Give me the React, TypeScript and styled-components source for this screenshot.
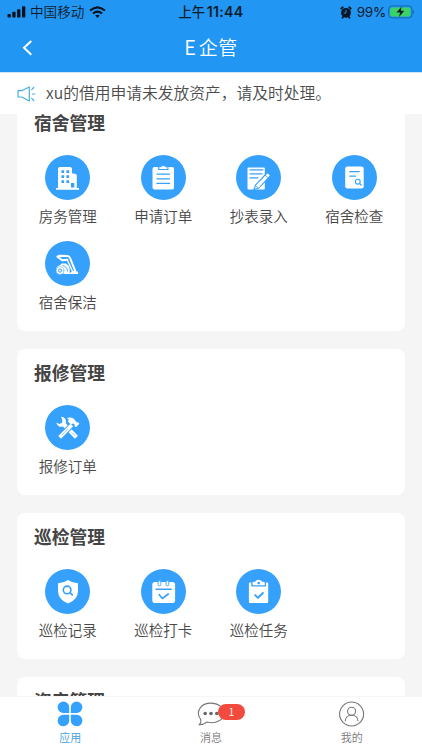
import React from "react";
import styled, { createGlobalStyle } from "styled-components";

const GlobalStyle = createGlobalStyle`
  * { box-sizing: border-box; }
  body {
    margin: 0;
    font-family: "Noto Sans CJK SC", "Noto Sans", sans-serif;
    font-weight: 350;
    color: #444;
  }
`;

const Screen = styled.div`
  width: 422px;
  height: 750px;
  display: flex;
  flex-direction: column;
  overflow: hidden;
  background: #f5f5f5;
`;

const Header = styled.header`
  flex: none;
  height: 72px;
  background: #2196f3;
`;

const StatusBar = styled.div`
  height: 24px;
  padding: 0 7px;
  display: grid;
  grid-template-columns: 1fr auto 1fr;
  align-items: center;
  color: #101c2c;
  font-size: 13.6px;
  line-height: 22px;
`;

const StatusGroup = styled.div<{ $end?: boolean }>`
  display: flex;
  align-items: center;
  justify-content: ${(p) => (p.$end ? "flex-end" : "flex-start")};
  gap: 5px;
  svg { flex: none; }
`;

const Carrier = styled.span`
  margin: -2px 0 0 -1px;
`;

const Clock = styled.div`
  display: flex;
  font-size: 13.2px;
  font-weight: 500;
  span {
    font-family: Inter, sans-serif;
    font-size: 14.2px;
    font-weight: 600;
    letter-spacing: 0.25px;
    margin-left: 2px;
  }
`;

const Percent = styled.span`
  font-family: Inter, sans-serif;
  font-weight: 400;
  font-size: 13.6px;
  letter-spacing: -0.3px;
  margin-right: -3px;
`;

const NavBar = styled.div`
  height: 48px;
  display: grid;
  grid-template-columns: 44px 1fr 44px;
  align-items: center;
  color: #fff;
`;

const BackButton = styled.button`
  height: 44px;
  padding: 0 0 0 22px;
  display: flex;
  align-items: center;
  border: 0;
  background: none;
  color: inherit;
`;

const PageTitle = styled.h1`
  margin: 0 0 2px 0;
  text-align: center;
  font-size: 19px;
  line-height: 44px;
  font-weight: 350;
  letter-spacing: 0.5px;
`;

const Latin = styled.span`
  font-size: 20px;
  letter-spacing: 3px;
`;

const Notice = styled.div`
  flex: none;
  height: 42px;
  padding: 0 17px;
  display: flex;
  align-items: center;
  gap: 10px;
  background: #fff;
  border-top: 1px solid #cfe7fc;
  font-size: 15.75px;
  line-height: 38px;
  white-space: nowrap;
  color: #4b4b4b;
  span { margin-bottom: 2px; }
`;

const Content = styled.main`
  flex: 1;
  min-height: 0;
  overflow: hidden;
  padding: 0 17px;
`;

const CardList = styled.div`
  margin-top: -15px;
  display: flex;
  flex-direction: column;
  gap: 18px;
`;

const Card = styled.section`
  padding: 11px 0 19px;
  background: #fff;
  border-radius: 8px;
`;

const CardTitle = styled.h2`
  margin: 0 0 21px 17px;
  font-size: 17.8px;
  line-height: 24px;
  font-weight: 700;
  color: #444;
`;

const Grid = styled.div`
  display: grid;
  grid-template-columns: repeat(4, 95.5px);
  margin-left: 3px;
  row-gap: 15px;
`;

const Entry = styled.div`
  height: 71px;
  display: flex;
  flex-direction: column;
  align-items: center;
`;

const Disc = styled.div`
  width: 45px;
  height: 45px;
  border-radius: 50%;
  background: #36a1fc;
`;

const EntryLabel = styled.span`
  margin-top: 5px;
  font-size: 14.5px;
  line-height: 22px;
  color: #484848;
`;

const TabBar = styled.nav`
  flex: none;
  height: 54px;
  display: grid;
  grid-template-columns: repeat(3, 1fr);
  background: #fff;
  border-top: 1px solid #f7f7f7;
`;

const Tab = styled.div<{ $active?: boolean }>`
  padding-top: 3px;
  display: flex;
  flex-direction: column;
  align-items: center;
  font-size: 11px;
  line-height: 18px;
  color: ${(p) => (p.$active ? "#40a2dd" : "#777")};
`;

const TabIcon = styled.div`
  position: relative;
  width: 28px;
  height: 28px;
  svg { display: block; }
`;

const Badge = styled.span`
  position: absolute;
  left: 21px;
  top: 4px;
  width: 27px;
  height: 16px;
  border-radius: 8px;
  background: #f24b3d;
  color: #fff;
  font-size: 10.5px;
  line-height: 15px;
  text-align: center;
`;

const B = "#36a1fc";

const Glyph = ({ children }: { children: React.ReactNode }) => (
  <svg width="45" height="45" viewBox="0 0 45 45" fill="none" stroke={B} strokeLinecap="round" strokeLinejoin="round">
    {children}
  </svg>
);

const Building = () => (
  <Glyph>
    <path fill="#fff" stroke="none" d="M13 14q0-2 2-2h10q2 0 2 2v4.2l3.6.8q1.2.3 1.2 1.6V33H34v1.7H11V33h2z" />
    <path strokeWidth="2.7" strokeLinecap="butt" strokeDasharray="2.7 2.3" d="M17.8 15.3v12.7M22.8 15.3v12.7" />
    <path fill={B} stroke="none" d="M26 28h3.3v4.5H26z" />
  </Glyph>
);

const Clipboard = () => (
  <Glyph>
    <rect x="11.5" y="12" width="21.5" height="22.5" rx="2" fill="#fff" stroke="none" />
    <path fill="#fff" strokeWidth="1.1" d="M17.7 11.8v2.7h9.2v-2.7h-2.2v-1h-4.8v1z" />
    <path strokeWidth="1.3" d="M16 19.2h12.5M16 23.8h12.5M16 28.4h12.5" />
  </Glyph>
);

const Meter = () => (
  <Glyph>
    <rect x="11.5" y="12.5" width="17.3" height="22" rx="1" fill="#fff" stroke="none" />
    <path strokeWidth="1.3" d="M14 14.8h13M14 18.8h12M14 22.8h8" />
    <path fill="#fff" strokeWidth="1.1" d="m19.5 30.2 11-11.7q1-1 2.2 0l1 .9q1 1 0 2L22.9 33l-4.9 1.5z" />
    <path strokeWidth=".8" d="m29.3 20.2 2.7 2.6M19.7 30.7l2.3 2" />
  </Glyph>
);

const Inspection = () => (
  <Glyph>
    <rect x="13.2" y="11.5" width="18.5" height="22" rx="2.2" fill="#fff" stroke="none" />
    <path strokeWidth="1.2" d="M17.8 16.7h9.4M17.8 21.2h5.8" />
    <circle cx="25.8" cy="26.7" r="2.4" strokeWidth="1.1" />
    <path strokeWidth="1.2" d="m27.7 28.6 1.4 1.4" />
  </Glyph>
);

const Vacuum = () => (
  <Glyph>
    <path stroke="#fff" strokeWidth="2" d="m12.4 15.6 2.2-.9 7.8.4q1.8.1 2.6 1.8l5.6 14M12.4 15.6l4.8 3.6 5-.4" />
    <path stroke="#fff" strokeWidth="1.4" d="m22.2 18.8 5.9 13" />
    <path fill="#fff" stroke="none" d="M11.3 27.6q.3-2.6 3-3l2.6-2.1h4q3 1.8 3.6 4.8l.4 4.9H14z" />
    <path strokeWidth=".9" d="M17.8 24.6q4.4.8 4.9 5.5" />
    <circle cx="15" cy="29.6" r="3.9" fill="#fff" strokeWidth=".5" />
    <circle cx="15" cy="29.6" r="1.6" strokeWidth="1" />
    <path fill="#fff" stroke="none" d="m27.5 29.8 5.6.9v2.2h-7.4v-1.4z" />
    <path stroke="#fff" strokeWidth="1.2" d="M19 32.3h9" />
  </Glyph>
);

const Tools = () => (
  <Glyph>
    <path stroke="#fff" strokeWidth="4.2" strokeLinecap="butt" d="m18 18.5 13.4 13.7" />
    <path
      fill="#fff"
      stroke="none"
      d="M16 11.8q4.3.2 5 4.1.4 2.7-1.1 4.5-2.2 1.9-5.1 1.3-3-.9-3.5-4.3l3 1.7 2.8-1.3.2-2.9z"
    />
    <path strokeWidth="5.6" strokeLinecap="butt" d="m17.4 29.6 8.8-8.9" />
    <path stroke="#fff" strokeWidth="3.8" strokeLinecap="butt" d="M14.7 32.3 26.8 20" />
    <path fill="#fff" stroke="none" d="M21.8 13.1q3.7-1.6 7 .7l3.1 3.8 1.2-.3 1.2 1.4-3.3 3.6-1.5-1.3.2-1.4-1.9-1.1-1.9 1-3-3 .9-1.8q-.7-1.1-2-1.6z" />
    <path strokeWidth=".6" strokeDasharray=".8 1" d="m17 29.9 5.5-5.6M27.4 28l2.5 2.6" />
  </Glyph>
);

const Shield = () => (
  <Glyph>
    <path fill="#fff" stroke="none" d="M23 11q4.7 3.3 10 3.2V22q0 8.7-10 12.6Q13 30.7 13 22v-7.8q5.3.1 10-3.2z" />
    <circle cx="22.1" cy="20.9" r="3.8" strokeWidth="1.6" />
    <path strokeWidth="1.7" d="m25.2 23.8 2.1 2" />
  </Glyph>
);

const Calendar = () => (
  <Glyph>
    <rect x="11.3" y="13" width="22.8" height="21" rx="2.8" fill="#fff" stroke="none" />
    <path strokeWidth="1.5" d="M15.1 20.2h15.1" />
    <rect x="17.1" y="11.6" width="2.8" height="5.3" rx="1.4" fill="#fff" strokeWidth=".9" />
    <rect x="25" y="11.6" width="2.8" height="5.3" rx="1.4" fill="#fff" strokeWidth=".9" />
    <path strokeWidth="1.6" d="m18.2 25.7 3.1 3.8 6-4.5" />
  </Glyph>
);

const Task = () => (
  <Glyph>
    <rect x="12.9" y="13.5" width="19.3" height="20.6" rx="1" fill="#fff" stroke="none" />
    <path fill="#fff" strokeWidth="1.3" d="M15.9 13v3.8h13.5V13q-.4-1-3-.9-.9-2-3.8-2t-3.7 2q-3-.1-3 .9z" />
    <circle cx="22.7" cy="14.1" r="1.3" fill={B} stroke="none" />
    <path strokeWidth="1.9" d="m19.2 26.1 2.7 2.7 5-4.8" />
  </Glyph>
);

type Item = { label: string; icon: React.ComponentType };

const sections: { title: string; items: Item[] }[] = [
  {
    title: "宿舍管理",
    items: [
      { label: "房务管理", icon: Building },
      { label: "申请订单", icon: Clipboard },
      { label: "抄表录入", icon: Meter },
      { label: "宿舍检查", icon: Inspection },
      { label: "宿舍保洁", icon: Vacuum },
    ],
  },
  { title: "报修管理", items: [{ label: "报修订单", icon: Tools }] },
  {
    title: "巡检管理",
    items: [
      { label: "巡检记录", icon: Shield },
      { label: "巡检打卡", icon: Calendar },
      { label: "巡检任务", icon: Task },
    ],
  },
  { title: "资产管理", items: [] },
];

export default function App() {
  return (
    <Screen>
      <GlobalStyle />
      <Header>
        <StatusBar>
          <StatusGroup>
            <svg width="19" height="12" viewBox="0 0 19 12" fill="#08121e">
              <rect x="0.5" y="8" width="3.3" height="3.6" rx=".8" />
              <rect x="5.3" y="5.8" width="3.3" height="5.8" rx=".8" />
              <rect x="10.1" y="3.2" width="3.3" height="8.4" rx=".8" />
              <rect x="15" y=".3" width="3.3" height="11.3" rx=".8" />
            </svg>
            <Carrier>中国移动</Carrier>
            <svg width="17" height="13" viewBox="0 0 17 13" fill="none" stroke="#08121e" strokeWidth="2.2">
              <path d="M1.1 4.5q7.4-6.4 14.8 0M3.9 7.5q4.6-3.9 9.2 0" />
              <path d="m8.5 12-2.3-2.4q2.3-1.8 4.6 0z" fill="#08121e" stroke="none" />
            </svg>
          </StatusGroup>
          <Clock>上午<span>11:44</span></Clock>
          <StatusGroup $end>
            <svg width="12" height="13" viewBox="0 0 12 13" fill="none" stroke="#0c1622" strokeLinecap="round">
              <circle cx="6" cy="6.8" r="4.9" fill="#0c1622" stroke="none" />
              <path strokeWidth="1.8" d="m1.3 2.5 1.5-1.2M10.7 2.5 9.2 1.3M2.5 11.8l.8-1M9.5 11.8l-.8-1" />
              <path stroke="#2196f3" strokeWidth=".9" d="M6 4.2v2.9H4" />
            </svg>
            <Percent>99%</Percent>
            <svg width="27" height="14" viewBox="0 0 27 14">
              <rect x=".7" y=".9" width="23.3" height="12" rx="3.4" fill="none" stroke="#1766a8" />
              <rect x="2.2" y="2.4" width="20.3" height="9" rx="2" fill="#3bd267" />
              <path d="M25 4.8q2 2 0 4.2z" fill="#1766a8" />
              <path d="m13.7 1.6-5.2 6h3.6l-1.1 4.3 5.3-6.1h-3.6z" fill="#0b1c23" />
            </svg>
          </StatusGroup>
        </StatusBar>
        <NavBar>
          <BackButton aria-label="返回">
            <svg width="11" height="16" viewBox="0 0 11 16" fill="none" stroke="currentColor" strokeWidth="2">
              <path d="M9.3.9 2 7.8l7.3 6.9" />
            </svg>
          </BackButton>
          <PageTitle><Latin>E</Latin>企管</PageTitle>
        </NavBar>
      </Header>
      <Notice>
        <svg width="19" height="18" viewBox="0 0 19 18" fill="none" stroke="#4aaee3" strokeWidth="1.2" strokeLinecap="round" strokeLinejoin="round">
          <path d="M1 5.7h3.7L12.3 2v14l-7.6-4H1zM14.7 4.7l2-2.2M15.5 9h2.3M14.7 13.3l2 2.2" />
        </svg>
        <span>xu的借用申请未发放资产，请及时处理。</span>
      </Notice>
      <Content>
        <CardList>
          {sections.map(({ title, items }) => (
            <Card key={title}>
              <CardTitle>{title}</CardTitle>
              <Grid>
                {items.map(({ label, icon: Icon }) => (
                  <Entry key={label}>
                    <Disc><Icon /></Disc>
                    <EntryLabel>{label}</EntryLabel>
                  </Entry>
                ))}
              </Grid>
            </Card>
          ))}
        </CardList>
      </Content>
      <TabBar>
        <Tab $active>
          <TabIcon>
            <svg width="28" height="28" viewBox="0 0 28 28" fill={B}>
              <path d="M13.2 13.1H7.3a5.8 5.8 0 1 1 5.9-5.8zM14.8 13.1h5.9a5.8 5.8 0 1 0-5.9-5.8zM13.2 14.7H7.3a5.8 5.8 0 1 0 5.9 5.8zM14.8 14.7h5.9a5.8 5.8 0 1 1-5.9 5.8z" />
            </svg>
          </TabIcon>
          应用
        </Tab>
        <Tab>
          <TabIcon>
            <svg width="28" height="28" viewBox="0 0 28 28" fill="none" stroke="#777" strokeWidth="1.1">
              <path d="M3.5 19.2C-1.8 11.7 3.7 3.1 14 3.1c7.2 0 12.8 4.3 12.8 9.8 0 7.1-8.2 11.6-16.7 9.1-2.3 1.7-4.9 2.7-7.8 2.6 1.6-1.8 2-3.4 1.2-5.4z" />
              <g fill="#666" stroke="none"><circle cx="8.2" cy="13.5" r="1.8" /><circle cx="14" cy="13.5" r="1.8" /><circle cx="19.8" cy="13.5" r="1.8" /></g>
            </svg>
            <Badge>1</Badge>
          </TabIcon>
          消息
        </Tab>
        <Tab>
          <TabIcon>
            <svg width="28" height="28" viewBox="0 0 28 28" fill="none" stroke="#777" strokeWidth="1.1">
              <circle cx="13.6" cy="14" r="12" />
              <circle cx="13.6" cy="11.2" r="4" />
              <path d="M7.1 21.2q.5-6 6.5-6t6.5 6" />
            </svg>
          </TabIcon>
          我的
        </Tab>
      </TabBar>
    </Screen>
  );
}
